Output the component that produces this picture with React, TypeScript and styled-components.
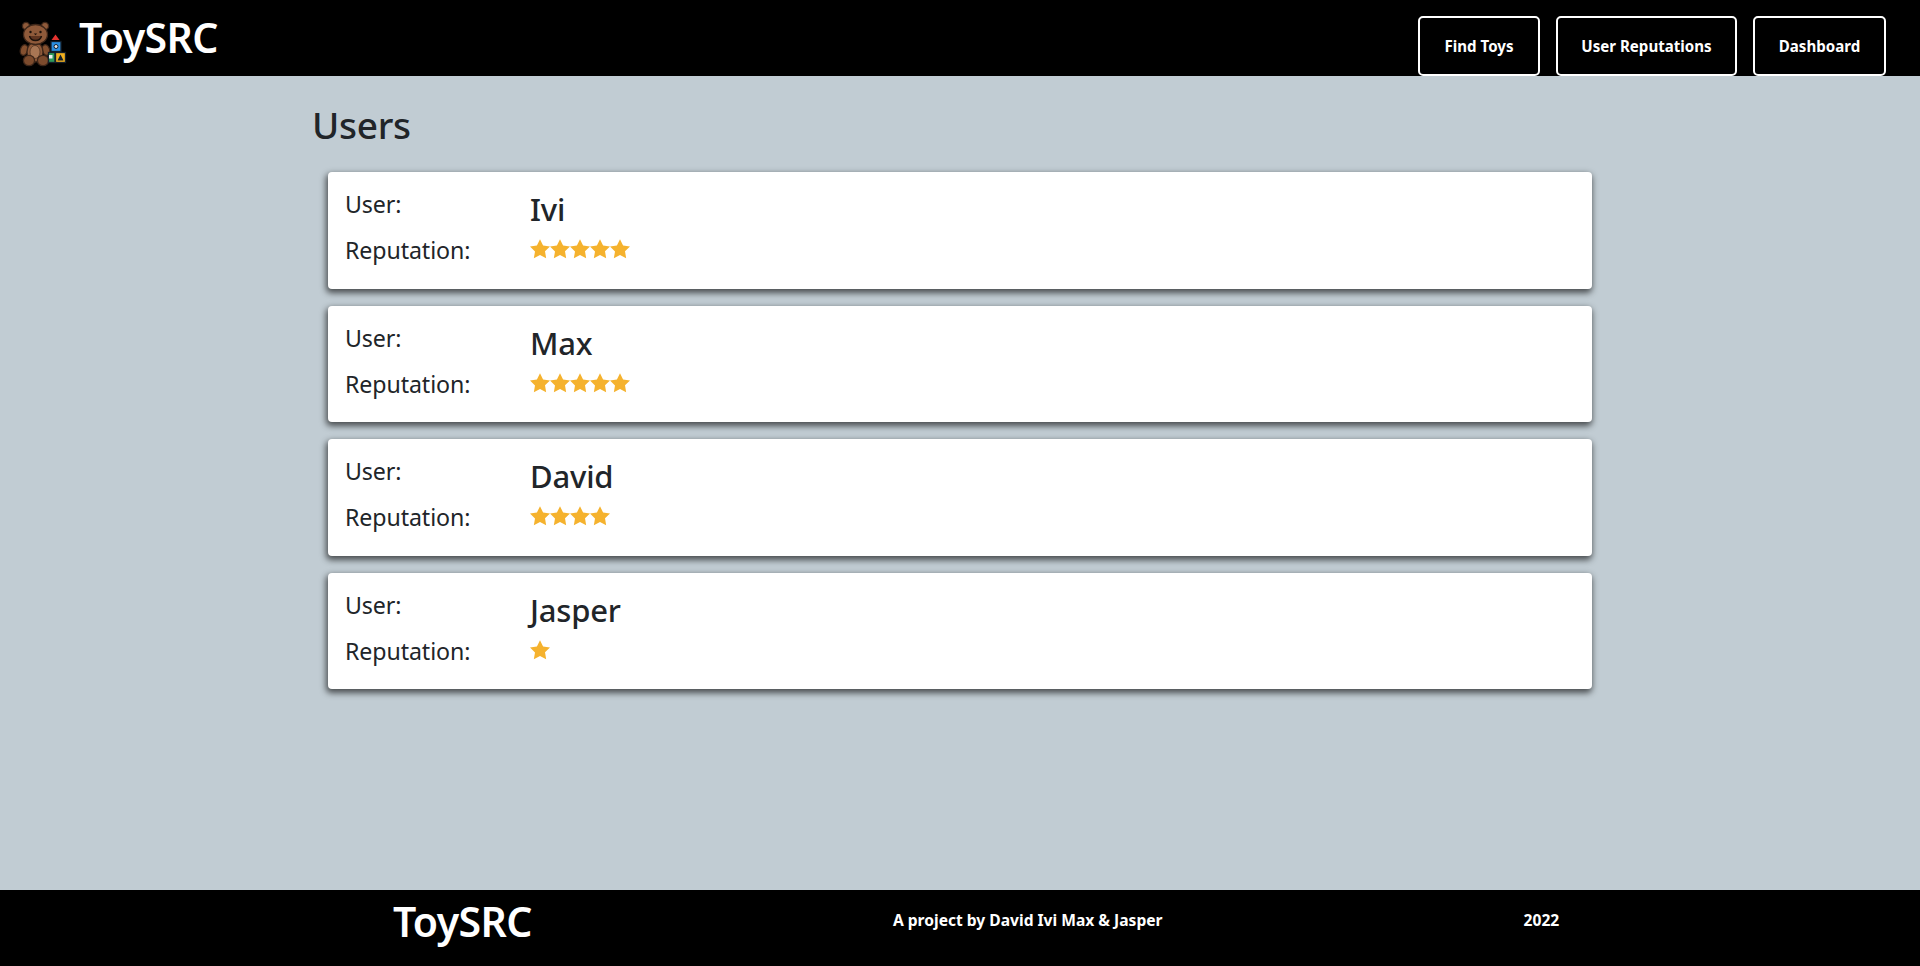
import React from 'react';
import styled, { createGlobalStyle } from 'styled-components';

const GlobalStyle = createGlobalStyle`
  html, body { margin: 0; padding: 0; }
  body {
    font-family: "Noto Sans", "Open Sans", "Liberation Sans", sans-serif;
    color: #212529;
    background: #c1ccd3;
  }
`;

const Page = styled.div`
  min-height: 966px;
  display: flex;
  flex-direction: column;
`;

const NavBar = styled.nav`
  height: 76px;
  background: #000;
  display: flex;
  align-items: flex-start;
  justify-content: space-between;
  padding: 0 34px 0 18px;
`;

const Brand = styled.div`
  display: flex;
  align-items: center;
  gap: 11px;
  height: 76px;
`;

const BrandName = styled.span`
  font-size: 41px;
  font-weight: 600;
  color: #fff;
  letter-spacing: -0.6px;
  position: relative;
  top: -1px;
`;

const Logo = styled.svg`
  overflow: visible;
`;

const NavLinks = styled.div`
  display: flex;
  gap: 16px;
  padding-top: 16px;
`;

const NavButton = styled.a`
  box-sizing: border-box;
  height: 60px;
  display: flex;
  align-items: center;
  justify-content: center;
  width: ${(p: { $w: number }) => p.$w}px;
  border: 2px solid #fff;
  border-radius: 5px;
  color: #fff;
  font-size: 15.1px;
  font-weight: 700;
`;

const Container = styled.main`
  box-sizing: border-box;
  flex: 1;
  width: 1320px;
  margin: 0 auto;
  padding: 0 12px;
`;

const Heading = styled.h2`
  margin: 0;
  padding-top: 23px;
  height: 96px;
  box-sizing: border-box;
  font-size: 37px;
  line-height: 52px;
  font-weight: 500;
  letter-spacing: -0.3px;
`;

const CardList = styled.div`
  display: flex;
  flex-direction: column;
  gap: 17px;
  padding: 0 16px;
`;

const Card = styled.article`
  box-sizing: border-box;
  height: 116.5px;
  padding: 16px 17px;
  background: #fff;
  border-radius: 4px;
  box-shadow: -1px 3px 6px 1px rgba(0, 0, 0, 0.62);
  display: grid;
  grid-template-columns: 185px 1fr;
  grid-template-rows: 46px 46px;
`;

const Label = styled.div`
  font-size: 23.2px;
  line-height: 32px;
  letter-spacing: -0.1px;
`;

const UserName = styled.div`
  font-size: 31px;
  line-height: 42px;
  font-weight: 500;
  letter-spacing: -0.2px;
  color: #212529;
`;

const Stars = styled.div`
  display: flex;
  height: 32px;
  align-items: center;
  margin-top: -1px;
`;

const Footer = styled.footer`
  height: 76px;
  background: #000;
  color: #fff;
`;

const FooterInner = styled.div`
  box-sizing: border-box;
  width: 1320px;
  height: 62px;
  margin: 0 auto;
  padding-left: 93px;
  display: flex;
  align-items: center;
  gap: 361px;
`;

const FooterBrand = styled.span`
  font-size: 41px;
  font-weight: 600;
  letter-spacing: -0.6px;
`;

const FooterText = styled.span`
  font-size: 15.6px;
  font-weight: 700;
  position: relative;
  top: -1px;
`;

const Star = () => (
  <svg width="20" height="20" viewBox="0 0 24 24">
    <path
      fill="#f5b22e"
      d="M12 .2l3.7 7.6 8.3 1.2-6 5.8 1.4 8.3L12 19.2l-7.4 4 1.4-8.3-6-5.8 8.3-1.2z"
    />
  </svg>
);

// viewBox matches page pixels so the parts line up with the screenshot
const Teddy = () => (
  <Logo width="50" height="50" viewBox="18 13 50 50">
    <g stroke="#3d2619" strokeWidth="1.3">
      <circle cx="26" cy="26" r="3.6" fill="#8f5a3a" />
      <circle cx="45" cy="26" r="3.6" fill="#8f5a3a" />
      <ellipse cx="24" cy="50" rx="3.6" ry="5.4" fill="#84502f" transform="rotate(18 24 50)" />
      <ellipse cx="46" cy="50" rx="3.6" ry="5.4" fill="#84502f" transform="rotate(-18 46 50)" />
      <ellipse cx="35" cy="52" rx="8" ry="10" fill="#8f5a3a" />
      <ellipse cx="35" cy="52" rx="5" ry="6.5" fill="#a87654" strokeWidth="0.6" />
      <ellipse cx="35.5" cy="34.5" rx="12" ry="10" fill="#8f5a3a" />
      <ellipse cx="29" cy="60.5" rx="5.6" ry="5.2" fill="#7c4b2d" />
      <ellipse cx="43" cy="60.5" rx="5.6" ry="5.2" fill="#7c4b2d" />
    </g>
    <circle cx="30.5" cy="32" r="1.2" fill="#1c110b" />
    <circle cx="40.5" cy="32" r="1.2" fill="#1c110b" />
    <path d="M33.8 33.5h3.4l-1.7 1.8z" fill="#1c110b" />
    <path d="M29.5 36c1.5 6 10.5 6 12 0" fill="#5e3420" stroke="#1c110b" strokeWidth="1.4" />
    <path d="M55.5 34.5l4 5.5h-8z" fill="#e5332f" />
    <rect x="51" y="41.5" width="10" height="10" fill="#2a8fe0" stroke="#14202c" strokeWidth="1.3" />
    <circle cx="56" cy="46.5" r="2" fill="#e6e6e6" stroke="#14202c" />
    <rect x="48.5" y="52.5" width="6.5" height="10" fill="#2e9a5b" stroke="#14202c" strokeWidth="1.3" />
    <rect x="49" y="55" width="3.5" height="3.5" fill="#eee" />
    <rect x="55.5" y="52.5" width="10" height="10" fill="#f2b01e" stroke="#14202c" strokeWidth="1.3" />
    <path d="M60.5 54.5l3 6h-6z" fill="#14202c" />
  </Logo>
);

const users = [
  { name: 'Ivi', reputation: 5 },
  { name: 'Max', reputation: 5 },
  { name: 'David', reputation: 4 },
  { name: 'Jasper', reputation: 1 },
];

function App() {
  return (
    <Page>
      <GlobalStyle />
      <NavBar>
        <Brand>
          <Teddy />
          <BrandName>ToySRC</BrandName>
        </Brand>
        <NavLinks>
          <NavButton $w={122}>Find Toys</NavButton>
          <NavButton $w={181}>User Reputations</NavButton>
          <NavButton $w={133}>Dashboard</NavButton>
        </NavLinks>
      </NavBar>
      <Container>
        <Heading>Users</Heading>
        <CardList>
          {users.map((user) => (
            <Card key={user.name}>
              <Label>User:</Label>
              <UserName>{user.name}</UserName>
              <Label>Reputation:</Label>
              <Stars>
                {Array.from({ length: user.reputation }).map((_, i) => (
                  <Star key={i} />
                ))}
              </Stars>
            </Card>
          ))}
        </CardList>
      </Container>
      <Footer>
        <FooterInner>
          <FooterBrand>ToySRC</FooterBrand>
          <FooterText>A project by David Ivi Max &amp; Jasper</FooterText>
          <FooterText>2022</FooterText>
        </FooterInner>
      </Footer>
    </Page>
  );
}

export default App;
